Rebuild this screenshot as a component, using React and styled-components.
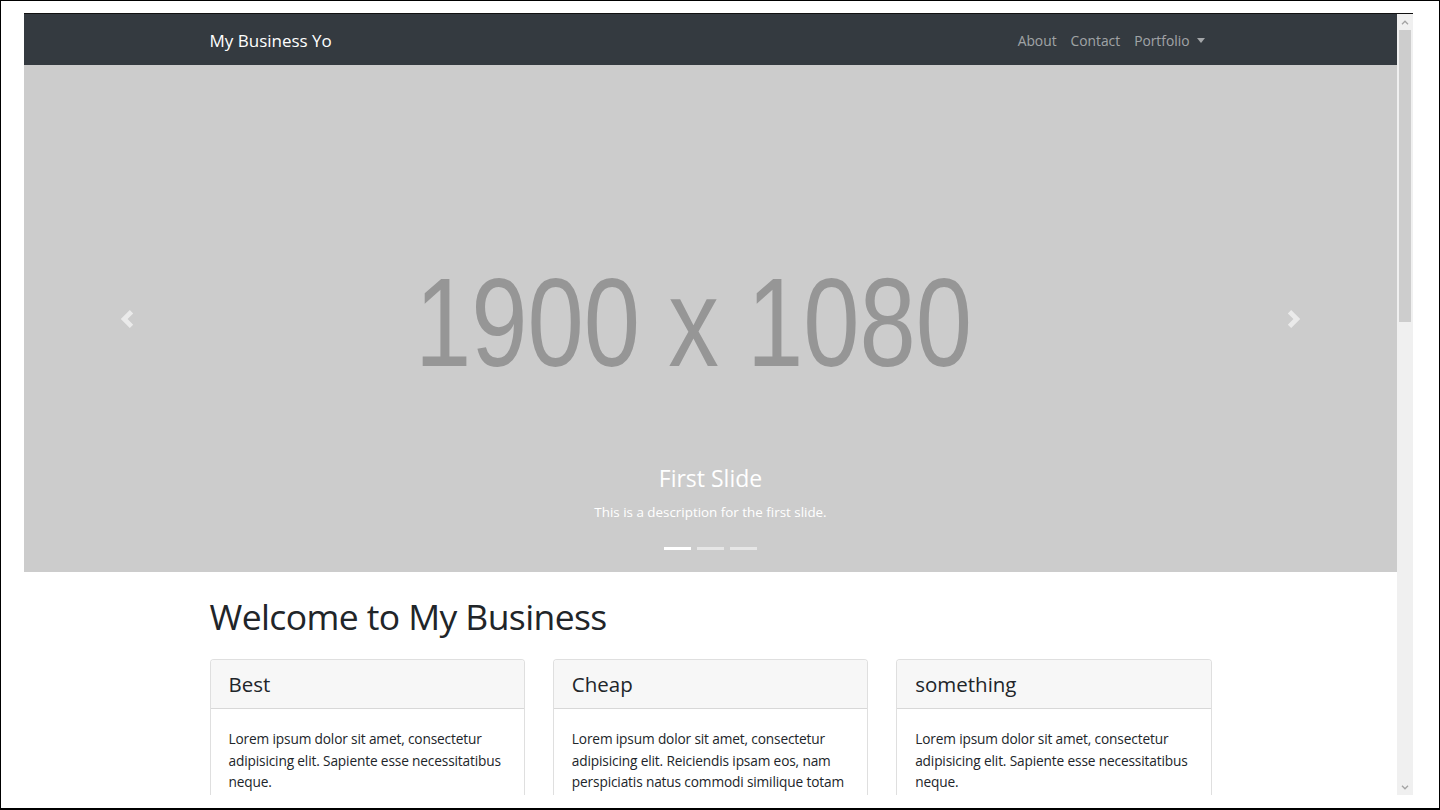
import React from "react";
import styled, { createGlobalStyle } from "styled-components";

const GlobalStyle = createGlobalStyle`
  html, body {
    margin: 0;
    padding: 0;
    background: #fff;
  }
  body {
    font-family: "Open Sans", "Noto Sans", sans-serif;
    color: #212529;
  }
  * {
    box-sizing: border-box;
  }
`;

const Frame = styled.div`
  width: 1440px;
  height: 810px;
  border: 1px solid #000;
  border-bottom-width: 2px;
  background: #fff;
  padding: 12px 0 0 23px;
  overflow: hidden;
`;

const Browser = styled.div`
  width: 1389px;
  height: 782px;
  border-top: 1px solid #111;
  display: flex;
`;

const Page = styled.div`
  flex: 1;
  overflow: hidden;
  display: flex;
  flex-direction: column;
`;

const Navbar = styled.nav`
  height: 51px;
  flex-shrink: 0;
  background-color: #343a40;
`;

const Container = styled.div`
  width: 1002px;
  margin: 0 auto;
`;

const NavInner = styled(Container)`
  height: 100%;
  display: flex;
  align-items: center;
  justify-content: space-between;
`;

const Brand = styled.a`
  color: #fff;
  font-size: 17px;
  text-decoration: none;
  margin-top: 1px;
`;

const NavLinks = styled.div`
  display: flex;
  align-items: center;
  margin-top: 1px;
`;

const NavLink = styled.a`
  color: rgba(255, 255, 255, 0.55);
  font-size: 13.8px;
  padding: 0 7px;
  display: flex;
  align-items: center;
  cursor: pointer;
`;

const Caret = styled.span`
  display: inline-block;
  margin-left: 7px;
  border-top: 5px solid rgba(255, 255, 255, 0.55);
  border-left: 4.5px solid transparent;
  border-right: 4.5px solid transparent;
`;

const Carousel = styled.div`
  position: relative;
  height: 507px;
  flex-shrink: 0;
  background-color: #ccc;
  overflow: hidden;
`;

const Placeholder = styled.svg`
  display: block;
`;

const Control = styled.div`
  position: absolute;
  top: 0;
  bottom: 0;
  ${(p) => (p.side === "left" ? "left: 0;" : "right: 0;")}
  width: 15%;
  display: flex;
  align-items: center;
  justify-content: center;
  opacity: 0.6;
`;

const Caption = styled.div`
  position: absolute;
  left: 15%;
  right: 15%;
  bottom: 50px;
  text-align: center;
  color: #fff;
`;

const CaptionTitle = styled.h5`
  margin: 0 0 9px;
  font-size: 23px;
  font-weight: 400;
  line-height: 1.2;
`;

const CaptionText = styled.p`
  margin: 0;
  font-size: 13.4px;
  line-height: 20px;
`;

const Indicators = styled.div`
  position: absolute;
  left: 0;
  right: 0;
  bottom: 22px;
  display: flex;
  justify-content: center;
`;

const Indicator = styled.span`
  width: 27px;
  height: 3px;
  margin: 0 3px;
  background: #fff;
  opacity: ${(p) => (p.active ? 1 : 0.5)};
`;

const Title = styled.h1`
  margin: 23px 0 21px;
  font-size: 35.5px;
  font-weight: 400;
  letter-spacing: -0.6px;
  line-height: 1.2;
  color: #212529;
`;

const CardRow = styled.div`
  display: grid;
  grid-template-columns: repeat(3, 1fr);
  gap: 28px;
`;

const Card = styled.div`
  border: 1px solid rgba(0, 0, 0, 0.125);
  border-radius: 4px;
  background: #fff;
  overflow: hidden;
`;

const CardHeader = styled.div`
  background-color: #f7f7f7;
  border-bottom: 1px solid rgba(0, 0, 0, 0.125);
  padding: 12px 18px 12px;
  font-size: 20.5px;
  line-height: 1.2;
`;

const CardBody = styled.div`
  padding: 19px 12px 19px 18px;
  font-size: 13.7px;
  letter-spacing: -0.15px;
  line-height: 21.6px;
`;

const Scrollbar = styled.div`
  width: 16px;
  flex-shrink: 0;
  background: #f0f0f0;
  display: flex;
  flex-direction: column;
`;

const ScrollArrow = styled.div`
  height: 16px;
  display: flex;
  align-items: center;
  justify-content: center;
`;

const Thumb = styled.div`
  height: 292px;
  margin: 0 2px 0 2px;
  background: #cdcdcd;
`;

const Spacer = styled.div`
  flex: 1;
`;

function Chevron({ dir }) {
  const d =
    dir === "left"
      ? "M5.25 0l-4 4 4 4 1.5-1.5L4.25 4l2.5-2.5L5.25 0z"
      : "M2.75 0l-1.5 1.5L3.75 4l-2.5 2.5L2.75 8l4-4-4-4z";
  return (
    <svg width="18" height="18" viewBox="0 0 8 8">
      <path d={d} fill="#fff" />
    </svg>
  );
}

function ScrollChevron({ up }) {
  return (
    <svg width="8" height="5" viewBox="0 0 8 5">
      <path
        d={up ? "M1 4.2L4 1.2 7 4.2" : "M1 0.8L4 3.8 7 0.8"}
        fill="none"
        stroke="#a3a3a3"
        strokeWidth="1.3"
      />
    </svg>
  );
}

const cards = [
  {
    title: "Best",
    text: "Lorem ipsum dolor sit amet, consectetur adipisicing elit. Sapiente esse necessitatibus neque.",
  },
  {
    title: "Cheap",
    text: "Lorem ipsum dolor sit amet, consectetur adipisicing elit. Reiciendis ipsam eos, nam perspiciatis natus commodi similique totam consectetur praesentium molestiae atque.",
  },
  {
    title: "something",
    text: "Lorem ipsum dolor sit amet, consectetur adipisicing elit. Sapiente esse necessitatibus neque.",
  },
];

export default function App() {
  return (
    <>
      <GlobalStyle />
      <Frame>
        <Browser>
          <Page>
            <Navbar>
              <NavInner>
                <Brand>My Business Yo</Brand>
                <NavLinks>
                  <NavLink>About</NavLink>
                  <NavLink>Contact</NavLink>
                  <NavLink>
                    Portfolio
                    <Caret />
                  </NavLink>
                </NavLinks>
              </NavInner>
            </Navbar>

            <Carousel>
              <Placeholder width="1373" height="507" viewBox="0 0 1373 507">
                <text
                  x="669.5"
                  y="301"
                  textAnchor="middle"
                  textLength="557"
                  lengthAdjust="spacingAndGlyphs"
                  fontFamily="Liberation Sans, Arial, sans-serif"
                  fontSize="127"
                  fill="#969696"
                >
                  1900 x 1080
                </text>
              </Placeholder>
              <Control side="left">
                <Chevron dir="left" />
              </Control>
              <Control side="right">
                <Chevron dir="right" />
              </Control>
              <Caption>
                <CaptionTitle>First Slide</CaptionTitle>
                <CaptionText>This is a description for the first slide.</CaptionText>
              </Caption>
              <Indicators>
                <Indicator active />
                <Indicator />
                <Indicator />
              </Indicators>
            </Carousel>

            <Container>
              <Title>Welcome to My Business</Title>
              <CardRow>
                {cards.map((c) => (
                  <Card key={c.title}>
                    <CardHeader>{c.title}</CardHeader>
                    <CardBody>{c.text}</CardBody>
                  </Card>
                ))}
              </CardRow>
            </Container>
          </Page>
          <Scrollbar>
            <ScrollArrow>
              <ScrollChevron up />
            </ScrollArrow>
            <Thumb />
            <Spacer />
            <ScrollArrow>
              <ScrollChevron />
            </ScrollArrow>
          </Scrollbar>
        </Browser>
      </Frame>
    </>
  );
}
